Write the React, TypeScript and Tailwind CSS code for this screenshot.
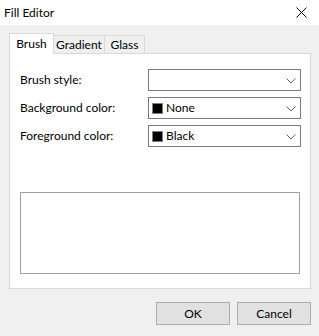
import React from "react";

function Chevron() {
  return (
    <svg width="10" height="6" viewBox="0 0 10 6" className="absolute right-[4px] top-[8px]">
      <path d="M0.5 0.5 L5 5 L9.5 0.5" fill="none" stroke="#606060" strokeWidth="1" />
    </svg>
  );
}

function Combo({ swatch, text }: { swatch?: boolean; text?: string }) {
  return (
    <div className="relative w-[153px] h-[22px] bg-white border border-[#7a7a7a] flex items-center pl-[3px]">
      {swatch && <div className="w-[11px] h-[11px] bg-black border border-[#808080] mr-[3px]" />}
      {text && <span className="text-[12px] text-black leading-none">{text}</span>}
      <Chevron />
    </div>
  );
}

export default function App() {
  return (
    <div
      className="w-[319px] h-[336px] bg-[#f0f0f0] flex flex-col"
      style={{ fontFamily: 'Lato, "Noto Sans", sans-serif' }}
    >
      <div className="h-[25px] bg-white flex items-center justify-between pl-[4px] pr-[12px]">
        <span className="text-[12px] text-black">Fill Editor</span>
        <svg width="11" height="11" viewBox="0 0 11 11">
          <path d="M0.5 0.5 L10.5 10.5 M10.5 0.5 L0.5 10.5" stroke="#000" strokeWidth="1" />
        </svg>
      </div>
      <div className="pl-[9px] pr-[8px] pt-[8px]">
        <div className="flex items-end h-[20px] relative z-10">
          <div className="h-[21px] -mb-[1px] bg-white border border-b-0 border-[#d9d9d9] flex items-center text-[12px] text-black w-[45px] justify-center">
            Brush
          </div>
          <div className="h-[18px] bg-[#f0f0f0] border border-l-0 border-b-0 border-[#d9d9d9] flex items-center text-[12px] text-black w-[51px] justify-center">
            Gradient
          </div>
          <div className="h-[18px] bg-[#f0f0f0] border border-l-0 border-b-0 border-[#d9d9d9] flex items-center text-[12px] text-black w-[40px] justify-center">
            Glass
          </div>
        </div>
        <div className="h-[236px] bg-white border border-[#d9d9d9] pt-[15px] pl-[10px] pr-[9px] flex flex-col">
          <div className="flex flex-col gap-[6px]">
            <div className="flex items-center justify-between">
              <span className="text-[12px] text-black">Brush style:</span>
              <Combo />
            </div>
            <div className="flex items-center justify-between">
              <span className="text-[12px] text-black">Background color:</span>
              <Combo swatch text="None" />
            </div>
            <div className="flex items-center justify-between">
              <span className="text-[12px] text-black">Foreground color:</span>
              <Combo swatch text="Black" />
            </div>
          </div>
          <div className="mt-[45px] mr-[1px] h-[82px] bg-white border border-[#a0a0a0]" />
        </div>
        <div className="flex justify-end gap-[7px] mt-[13px]">
          <div className="w-[74px] h-[23px] bg-[#e1e1e1] border border-[#adadad] flex items-center justify-center text-[12px] text-black">
            OK
          </div>
          <div className="w-[74px] h-[23px] bg-[#e1e1e1] border border-[#adadad] flex items-center justify-center text-[12px] text-black">
            Cancel
          </div>
        </div>
      </div>
    </div>
  );
}
